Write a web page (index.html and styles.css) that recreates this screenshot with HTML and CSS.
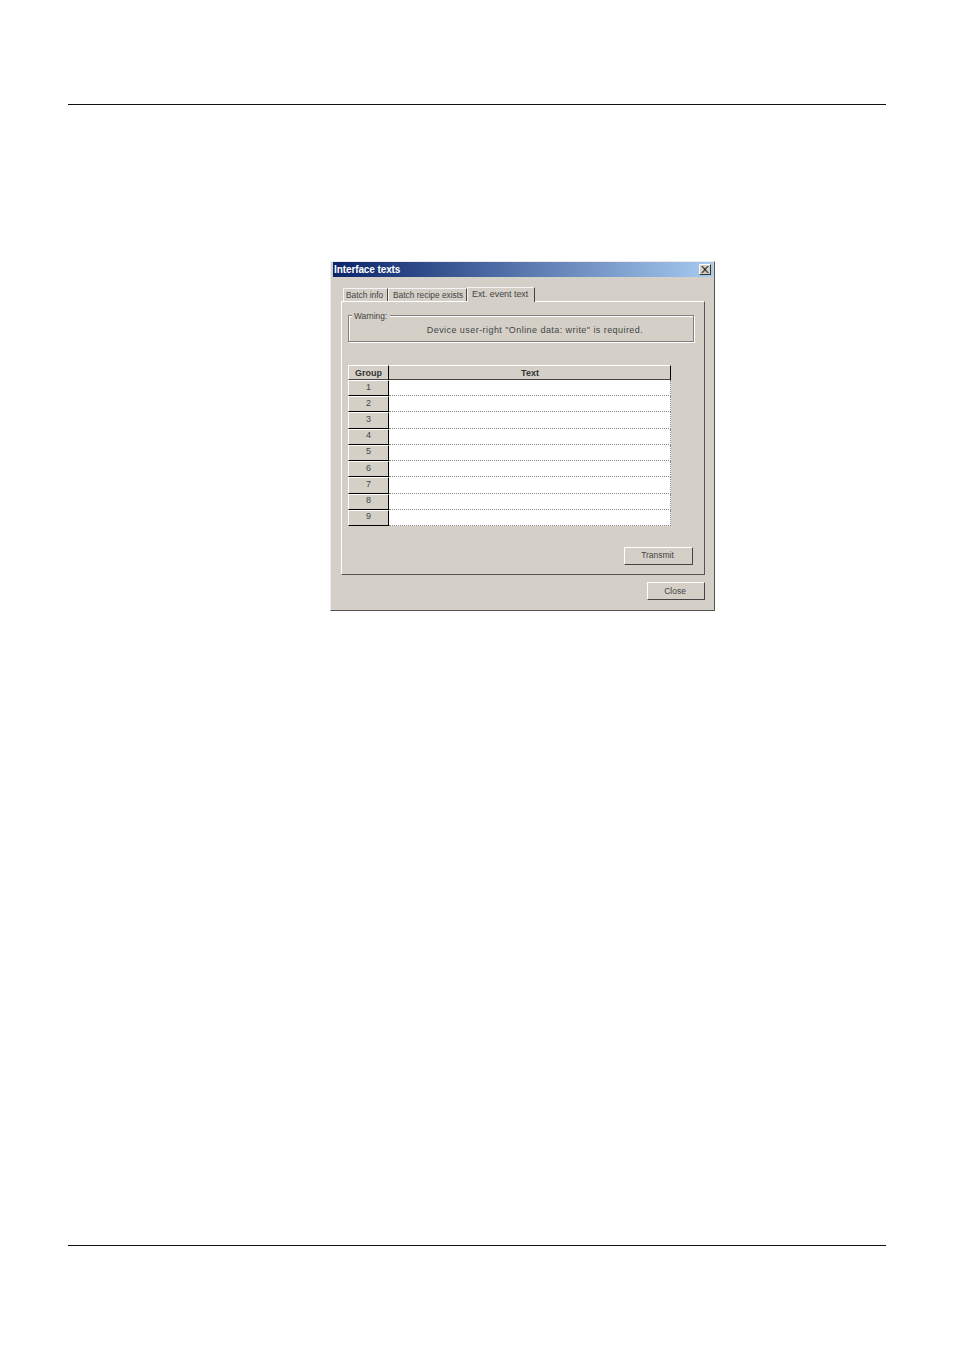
FILE: index.html
```html
<!DOCTYPE html>
<html>
<head>
    <meta charset="UTF-8">
    <title>Interface texts</title>
    <link rel="stylesheet" href="styles.css">
</head>
<body>
    <div class="page">
        <div class="rule rule-top"></div>

        <div class="dialog">
            <div class="titlebar">
                <span class="title">Interface texts</span>
                <span class="close-x">
                    <svg width="8" height="7" viewBox="0 0 8 7"><path d="M0.5 0L6.5 7M1.5 0L7.5 7M6.5 0L0.5 7M7.5 0L1.5 7" stroke="#222" stroke-width="0.8" fill="none"/></svg>
                </span>
            </div>

            <div class="tabs">
                <div class="tab tab-first">Batch info</div>
                <div class="tab tab-second">Batch recipe exists</div>
                <div class="tab tab-active">Ext. event text</div>
            </div>

            <div class="tab-panel">
                <div class="groupbox">
                    <span class="legend">Warning:</span>
                    <p class="warning-text">Device user-right "Online data: write" is required.</p>
                </div>

                <div class="grid">
                    <div class="head head-group">Group</div>
                    <div class="head head-text">Text</div>
                    <div class="row-no">1</div><div class="cell"></div>
                    <div class="row-no">2</div><div class="cell"></div>
                    <div class="row-no">3</div><div class="cell"></div>
                    <div class="row-no">4</div><div class="cell"></div>
                    <div class="row-no">5</div><div class="cell"></div>
                    <div class="row-no">6</div><div class="cell"></div>
                    <div class="row-no">7</div><div class="cell"></div>
                    <div class="row-no">8</div><div class="cell"></div>
                    <div class="row-no">9</div><div class="cell"></div>
                </div>

                <div class="panel-actions">
                    <button class="btn btn-transmit">Transmit</button>
                </div>
            </div>

            <div class="dialog-actions">
                <button class="btn btn-close">Close</button>
            </div>
        </div>

        <div class="rule rule-bottom"></div>
    </div>
</body>
</html>
```

FILE: styles.css
```css
* {
    box-sizing: border-box;
    margin: 0;
    padding: 0;
}
html, body {
    background: #fff;
}
body {
    font-family: "Liberation Sans", sans-serif;
    font-size: 9px;
    color: #444;
}
.page {
    height: 1350px;
    padding: 104px 68px 0;
    overflow: hidden;
}
.rule {
    height: 1px;
    background: #111;
}
.rule-bottom {
    margin-top: 634px;
}
.dialog {
    width: 385px;
    height: 350px;
    margin: 156px 0 0 262px;
    padding: 0 1px 0 2px;
    background: #d4d0c8;
    border-top: 1px solid #ececec;
    border-left: 1px solid #ececec;
    border-right: 1px solid #555;
    border-bottom: 1px solid #555;
}
.titlebar {
    height: 15px;
    display: flex;
    align-items: center;
    justify-content: space-between;
    padding: 0 2px 0 1px;
    background: linear-gradient(90deg, #0a246a, #a6caf0);
}
.title {
    color: #fff;
    font-size: 10px;
    font-weight: bold;
    letter-spacing: -0.1px;
}
.close-x {
    width: 12px;
    height: 11px;
    display: flex;
    align-items: center;
    justify-content: center;
    background: #d4d0c8;
    border-top: 1px solid #fff;
    border-left: 1px solid #fff;
    border-right: 1px solid #333;
    border-bottom: 1px solid #333;
}
.tabs {
    display: flex;
    align-items: flex-end;
    height: 24px;
    padding-left: 10px;
}
.tab {
    height: 13px;
    line-height: 13px;
    padding: 0 2px;
    font-size: 8.4px;
    white-space: nowrap;
    border-top: 1px solid #f4f4f4;
    border-left: 1px solid #f4f4f4;
    border-right: 1px solid #444;
}
.tab-first {
    width: 45px;
}
.tab-second {
    width: 79px;
    padding-left: 4px;
}
.tab-active {
    width: 68px;
    height: 15px;
    margin-bottom: -1px;
    padding-left: 4px;
    line-height: 13px;
    font-size: 8.9px;
    background: #d4d0c8;
    position: relative;
}
.tab-panel {
    width: 364px;
    height: 274px;
    margin-left: 8px;
    padding: 13px 0 0 6px;
    border-top: 1px solid #fff;
    border-left: 1px solid #fff;
    border-right: 1px solid #555;
    border-bottom: 1px solid #555;
}
.groupbox {
    position: relative;
    width: 346px;
    height: 27px;
    border: 1px solid #808080;
    box-shadow: 1px 1px 0 #fff, inset 1px 1px 0 #fff;
}
.legend {
    position: absolute;
    top: -5px;
    left: 3px;
    padding: 0 3px 0 2px;
    font-size: 8.4px;
    background: #d4d0c8;
    line-height: 10px;
}
.warning-text {
    margin-top: 9px;
    text-align: center;
    line-height: 11px;
    letter-spacing: 0.44px;
    padding-left: 28px;
}
.grid {
    display: grid;
    grid-template-columns: 41px 282px;
    grid-template-rows: 15px repeat(9, 1fr);
    width: 323px;
    height: 161px;
    margin-top: 23px;
}
.head {
    display: flex;
    align-items: center;
    justify-content: center;
    font-weight: bold;
    border-top: 1px solid #fff;
    border-bottom: 1px solid #444;
    color: #333;
}
.head-group {
    border-left: 1px solid #fff;
    border-right: 1px solid #000;
}
.head-text {
    border-right: 1px solid #000;
    padding-left: 1px;
}
.row-no {
    display: flex;
    align-items: center;
    justify-content: center;
    padding-bottom: 3px;
    border-top: 1px solid #fff;
    border-left: 1px solid #fff;
    border-right: 1px solid #000;
    border-bottom: 1px solid #000;
}
.cell {
    background: #fff;
    border-right: 1px dotted #888;
    border-bottom: 1px dotted #888;
}
.panel-actions {
    display: flex;
    justify-content: flex-end;
    margin-top: 21px;
    padding-right: 11px;
}
.dialog-actions {
    display: flex;
    justify-content: flex-end;
    margin-top: 7px;
    padding-right: 8px;
}
.btn {
    height: 18px;
    padding: 0 2px 2px 0;
    font-family: "Liberation Sans", sans-serif;
    font-size: 8.5px;
    color: #444;
    background: #d4d0c8;
    border-top: 1px solid #fff;
    border-left: 1px solid #fff;
    border-right: 1px solid #444;
    border-bottom: 1px solid #444;
}
.btn-transmit {
    width: 69px;
}
.btn-close {
    width: 58px;
    padding-bottom: 0;
}
```
